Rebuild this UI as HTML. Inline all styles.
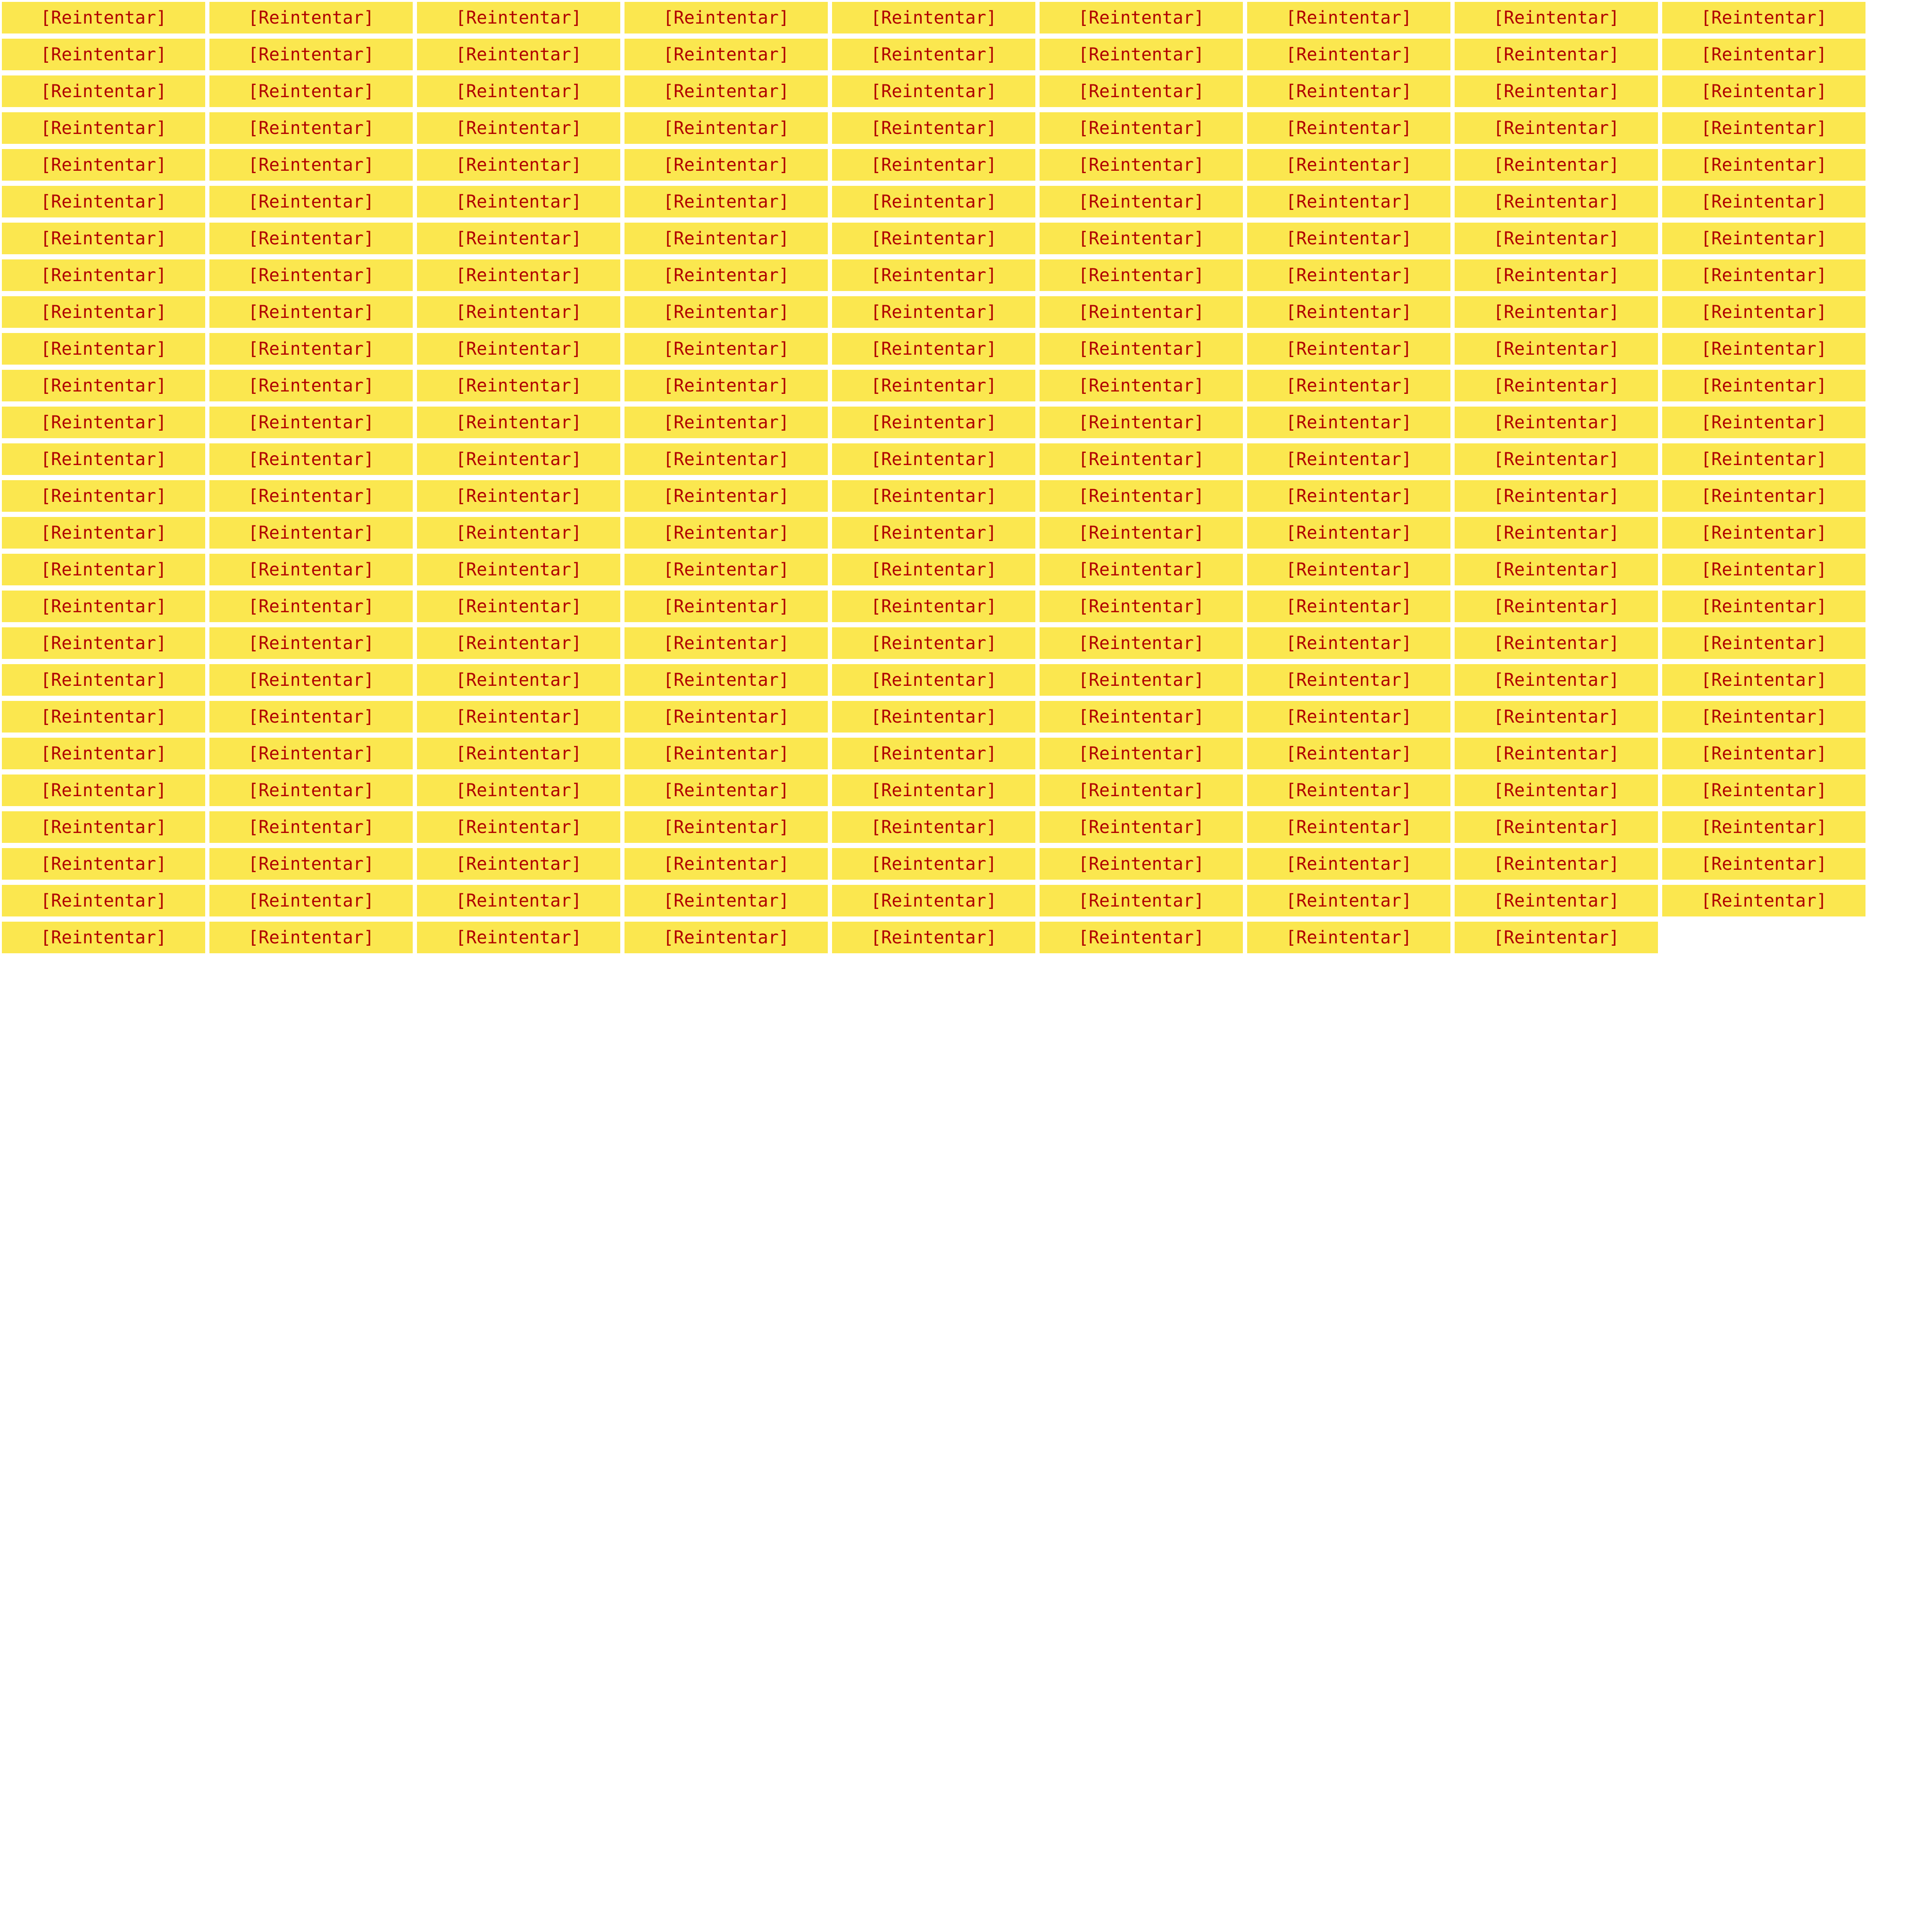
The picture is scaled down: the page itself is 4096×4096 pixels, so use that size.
<!DOCTYPE html>
<html><head><meta charset="utf-8"><style>
html,body{margin:0;padding:0;background:#fff;width:4096px;height:4096px;overflow:hidden}
.g{position:absolute;left:4px;top:4px;display:grid;grid-template-columns:repeat(9,431px);column-gap:9px;row-gap:11px;grid-auto-rows:67px}
.b{background:#fbe74f;color:#b00000;font-family:"DejaVu Sans Mono","Liberation Mono",monospace;font-size:37px;display:flex;align-items:center;justify-content:center;letter-spacing:0px}
</style></head><body><div class="g" id="g">
<div class="b">[Reintentar]</div><div class="b">[Reintentar]</div><div class="b">[Reintentar]</div><div class="b">[Reintentar]</div><div class="b">[Reintentar]</div><div class="b">[Reintentar]</div><div class="b">[Reintentar]</div><div class="b">[Reintentar]</div><div class="b">[Reintentar]</div>
<div class="b">[Reintentar]</div><div class="b">[Reintentar]</div><div class="b">[Reintentar]</div><div class="b">[Reintentar]</div><div class="b">[Reintentar]</div><div class="b">[Reintentar]</div><div class="b">[Reintentar]</div><div class="b">[Reintentar]</div><div class="b">[Reintentar]</div>
<div class="b">[Reintentar]</div><div class="b">[Reintentar]</div><div class="b">[Reintentar]</div><div class="b">[Reintentar]</div><div class="b">[Reintentar]</div><div class="b">[Reintentar]</div><div class="b">[Reintentar]</div><div class="b">[Reintentar]</div><div class="b">[Reintentar]</div>
<div class="b">[Reintentar]</div><div class="b">[Reintentar]</div><div class="b">[Reintentar]</div><div class="b">[Reintentar]</div><div class="b">[Reintentar]</div><div class="b">[Reintentar]</div><div class="b">[Reintentar]</div><div class="b">[Reintentar]</div><div class="b">[Reintentar]</div>
<div class="b">[Reintentar]</div><div class="b">[Reintentar]</div><div class="b">[Reintentar]</div><div class="b">[Reintentar]</div><div class="b">[Reintentar]</div><div class="b">[Reintentar]</div><div class="b">[Reintentar]</div><div class="b">[Reintentar]</div><div class="b">[Reintentar]</div>
<div class="b">[Reintentar]</div><div class="b">[Reintentar]</div><div class="b">[Reintentar]</div><div class="b">[Reintentar]</div><div class="b">[Reintentar]</div><div class="b">[Reintentar]</div><div class="b">[Reintentar]</div><div class="b">[Reintentar]</div><div class="b">[Reintentar]</div>
<div class="b">[Reintentar]</div><div class="b">[Reintentar]</div><div class="b">[Reintentar]</div><div class="b">[Reintentar]</div><div class="b">[Reintentar]</div><div class="b">[Reintentar]</div><div class="b">[Reintentar]</div><div class="b">[Reintentar]</div><div class="b">[Reintentar]</div>
<div class="b">[Reintentar]</div><div class="b">[Reintentar]</div><div class="b">[Reintentar]</div><div class="b">[Reintentar]</div><div class="b">[Reintentar]</div><div class="b">[Reintentar]</div><div class="b">[Reintentar]</div><div class="b">[Reintentar]</div><div class="b">[Reintentar]</div>
<div class="b">[Reintentar]</div><div class="b">[Reintentar]</div><div class="b">[Reintentar]</div><div class="b">[Reintentar]</div><div class="b">[Reintentar]</div><div class="b">[Reintentar]</div><div class="b">[Reintentar]</div><div class="b">[Reintentar]</div><div class="b">[Reintentar]</div>
<div class="b">[Reintentar]</div><div class="b">[Reintentar]</div><div class="b">[Reintentar]</div><div class="b">[Reintentar]</div><div class="b">[Reintentar]</div><div class="b">[Reintentar]</div><div class="b">[Reintentar]</div><div class="b">[Reintentar]</div><div class="b">[Reintentar]</div>
<div class="b">[Reintentar]</div><div class="b">[Reintentar]</div><div class="b">[Reintentar]</div><div class="b">[Reintentar]</div><div class="b">[Reintentar]</div><div class="b">[Reintentar]</div><div class="b">[Reintentar]</div><div class="b">[Reintentar]</div><div class="b">[Reintentar]</div>
<div class="b">[Reintentar]</div><div class="b">[Reintentar]</div><div class="b">[Reintentar]</div><div class="b">[Reintentar]</div><div class="b">[Reintentar]</div><div class="b">[Reintentar]</div><div class="b">[Reintentar]</div><div class="b">[Reintentar]</div><div class="b">[Reintentar]</div>
<div class="b">[Reintentar]</div><div class="b">[Reintentar]</div><div class="b">[Reintentar]</div><div class="b">[Reintentar]</div><div class="b">[Reintentar]</div><div class="b">[Reintentar]</div><div class="b">[Reintentar]</div><div class="b">[Reintentar]</div><div class="b">[Reintentar]</div>
<div class="b">[Reintentar]</div><div class="b">[Reintentar]</div><div class="b">[Reintentar]</div><div class="b">[Reintentar]</div><div class="b">[Reintentar]</div><div class="b">[Reintentar]</div><div class="b">[Reintentar]</div><div class="b">[Reintentar]</div><div class="b">[Reintentar]</div>
<div class="b">[Reintentar]</div><div class="b">[Reintentar]</div><div class="b">[Reintentar]</div><div class="b">[Reintentar]</div><div class="b">[Reintentar]</div><div class="b">[Reintentar]</div><div class="b">[Reintentar]</div><div class="b">[Reintentar]</div><div class="b">[Reintentar]</div>
<div class="b">[Reintentar]</div><div class="b">[Reintentar]</div><div class="b">[Reintentar]</div><div class="b">[Reintentar]</div><div class="b">[Reintentar]</div><div class="b">[Reintentar]</div><div class="b">[Reintentar]</div><div class="b">[Reintentar]</div><div class="b">[Reintentar]</div>
<div class="b">[Reintentar]</div><div class="b">[Reintentar]</div><div class="b">[Reintentar]</div><div class="b">[Reintentar]</div><div class="b">[Reintentar]</div><div class="b">[Reintentar]</div><div class="b">[Reintentar]</div><div class="b">[Reintentar]</div><div class="b">[Reintentar]</div>
<div class="b">[Reintentar]</div><div class="b">[Reintentar]</div><div class="b">[Reintentar]</div><div class="b">[Reintentar]</div><div class="b">[Reintentar]</div><div class="b">[Reintentar]</div><div class="b">[Reintentar]</div><div class="b">[Reintentar]</div><div class="b">[Reintentar]</div>
<div class="b">[Reintentar]</div><div class="b">[Reintentar]</div><div class="b">[Reintentar]</div><div class="b">[Reintentar]</div><div class="b">[Reintentar]</div><div class="b">[Reintentar]</div><div class="b">[Reintentar]</div><div class="b">[Reintentar]</div><div class="b">[Reintentar]</div>
<div class="b">[Reintentar]</div><div class="b">[Reintentar]</div><div class="b">[Reintentar]</div><div class="b">[Reintentar]</div><div class="b">[Reintentar]</div><div class="b">[Reintentar]</div><div class="b">[Reintentar]</div><div class="b">[Reintentar]</div><div class="b">[Reintentar]</div>
<div class="b">[Reintentar]</div><div class="b">[Reintentar]</div><div class="b">[Reintentar]</div><div class="b">[Reintentar]</div><div class="b">[Reintentar]</div><div class="b">[Reintentar]</div><div class="b">[Reintentar]</div><div class="b">[Reintentar]</div><div class="b">[Reintentar]</div>
<div class="b">[Reintentar]</div><div class="b">[Reintentar]</div><div class="b">[Reintentar]</div><div class="b">[Reintentar]</div><div class="b">[Reintentar]</div><div class="b">[Reintentar]</div><div class="b">[Reintentar]</div><div class="b">[Reintentar]</div><div class="b">[Reintentar]</div>
<div class="b">[Reintentar]</div><div class="b">[Reintentar]</div><div class="b">[Reintentar]</div><div class="b">[Reintentar]</div><div class="b">[Reintentar]</div><div class="b">[Reintentar]</div><div class="b">[Reintentar]</div><div class="b">[Reintentar]</div><div class="b">[Reintentar]</div>
<div class="b">[Reintentar]</div><div class="b">[Reintentar]</div><div class="b">[Reintentar]</div><div class="b">[Reintentar]</div><div class="b">[Reintentar]</div><div class="b">[Reintentar]</div><div class="b">[Reintentar]</div><div class="b">[Reintentar]</div><div class="b">[Reintentar]</div>
<div class="b">[Reintentar]</div><div class="b">[Reintentar]</div><div class="b">[Reintentar]</div><div class="b">[Reintentar]</div><div class="b">[Reintentar]</div><div class="b">[Reintentar]</div><div class="b">[Reintentar]</div><div class="b">[Reintentar]</div><div class="b">[Reintentar]</div>
<div class="b">[Reintentar]</div><div class="b">[Reintentar]</div><div class="b">[Reintentar]</div><div class="b">[Reintentar]</div><div class="b">[Reintentar]</div><div class="b">[Reintentar]</div><div class="b">[Reintentar]</div><div class="b">[Reintentar]</div>
</div></body></html>
